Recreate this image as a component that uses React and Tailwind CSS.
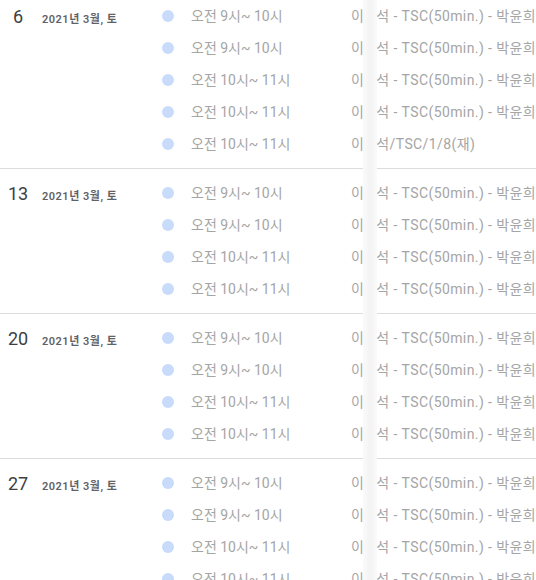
import React from "react";

const T1 = "이 석 - TSC(50min.) - 박윤희";

const groups = [
  {
    day: "6",
    events: [
      ["오전 9시~ 10시", T1],
      ["오전 9시~ 10시", T1],
      ["오전 10시~ 11시", T1],
      ["오전 10시~ 11시", T1],
      ["오전 10시~ 11시", "이 석/TSC/1/8(재)"],
    ],
  },
  {
    day: "13",
    events: [
      ["오전 9시~ 10시", T1],
      ["오전 9시~ 10시", T1],
      ["오전 10시~ 11시", T1],
      ["오전 10시~ 11시", T1],
    ],
  },
  {
    day: "20",
    events: [
      ["오전 9시~ 10시", T1],
      ["오전 9시~ 10시", T1],
      ["오전 10시~ 11시", T1],
      ["오전 10시~ 11시", T1],
    ],
  },
  {
    day: "27",
    events: [
      ["오전 9시~ 10시", T1],
      ["오전 9시~ 10시", T1],
      ["오전 10시~ 11시", T1],
      ["오전 10시~ 11시", T1],
    ],
  },
];

function EventRow({ time, title }) {
  const [first, ...rest] = title.split(" ");
  return (
    <div className="flex h-8 items-center whitespace-nowrap">
      <span className="ml-[2px] h-3 w-3 shrink-0 rounded-full bg-[#c8dbfb]" />
      <div className="ml-[17px] w-[160px] shrink-0 text-[14px] text-[#a5a5a5]">{time}</div>
      <div className="flex text-[14px] tracking-[0.4px] text-[#a5a5a5]">
        <span>{first}</span>
        <span className="ml-[12px]">{rest.join(" ")}</span>
      </div>
    </div>
  );
}

export default function App() {
  return (
    <div
      className="relative h-[580px] w-[536px] overflow-hidden bg-white"
      style={{ fontFamily: 'Roboto, "Noto Sans CJK KR", sans-serif' }}
    >
      {groups.map((g, i) => (
        <div key={i} className={`flex border-b border-[#dadce0] pb-2 ${i === 0 ? "pt-0" : "pt-2"}`}>
          <div className="flex h-8 w-[160px] shrink-0 items-baseline pt-[7px]">
            <div className="w-[36px] shrink-0 text-center text-[18px] leading-[20px] text-[#3c4043]">
              {g.day}
            </div>
            <div className="ml-[6px] text-[11px] font-semibold tracking-[0.5px] text-[#5f6368]">
              2021년 3월, 토
            </div>
          </div>
          <div className="flex-1">
            {g.events.map(([time, title], j) => (
              <EventRow key={j} time={time} title={title} />
            ))}
          </div>
        </div>
      ))}
      {/* blurred band over names */}
      <div className="absolute top-0 bottom-0 left-[363px] w-[14px] bg-gradient-to-r from-[#fafafa] via-[#f3f3f3] to-[#fafafa]" />
    </div>
  );
}
